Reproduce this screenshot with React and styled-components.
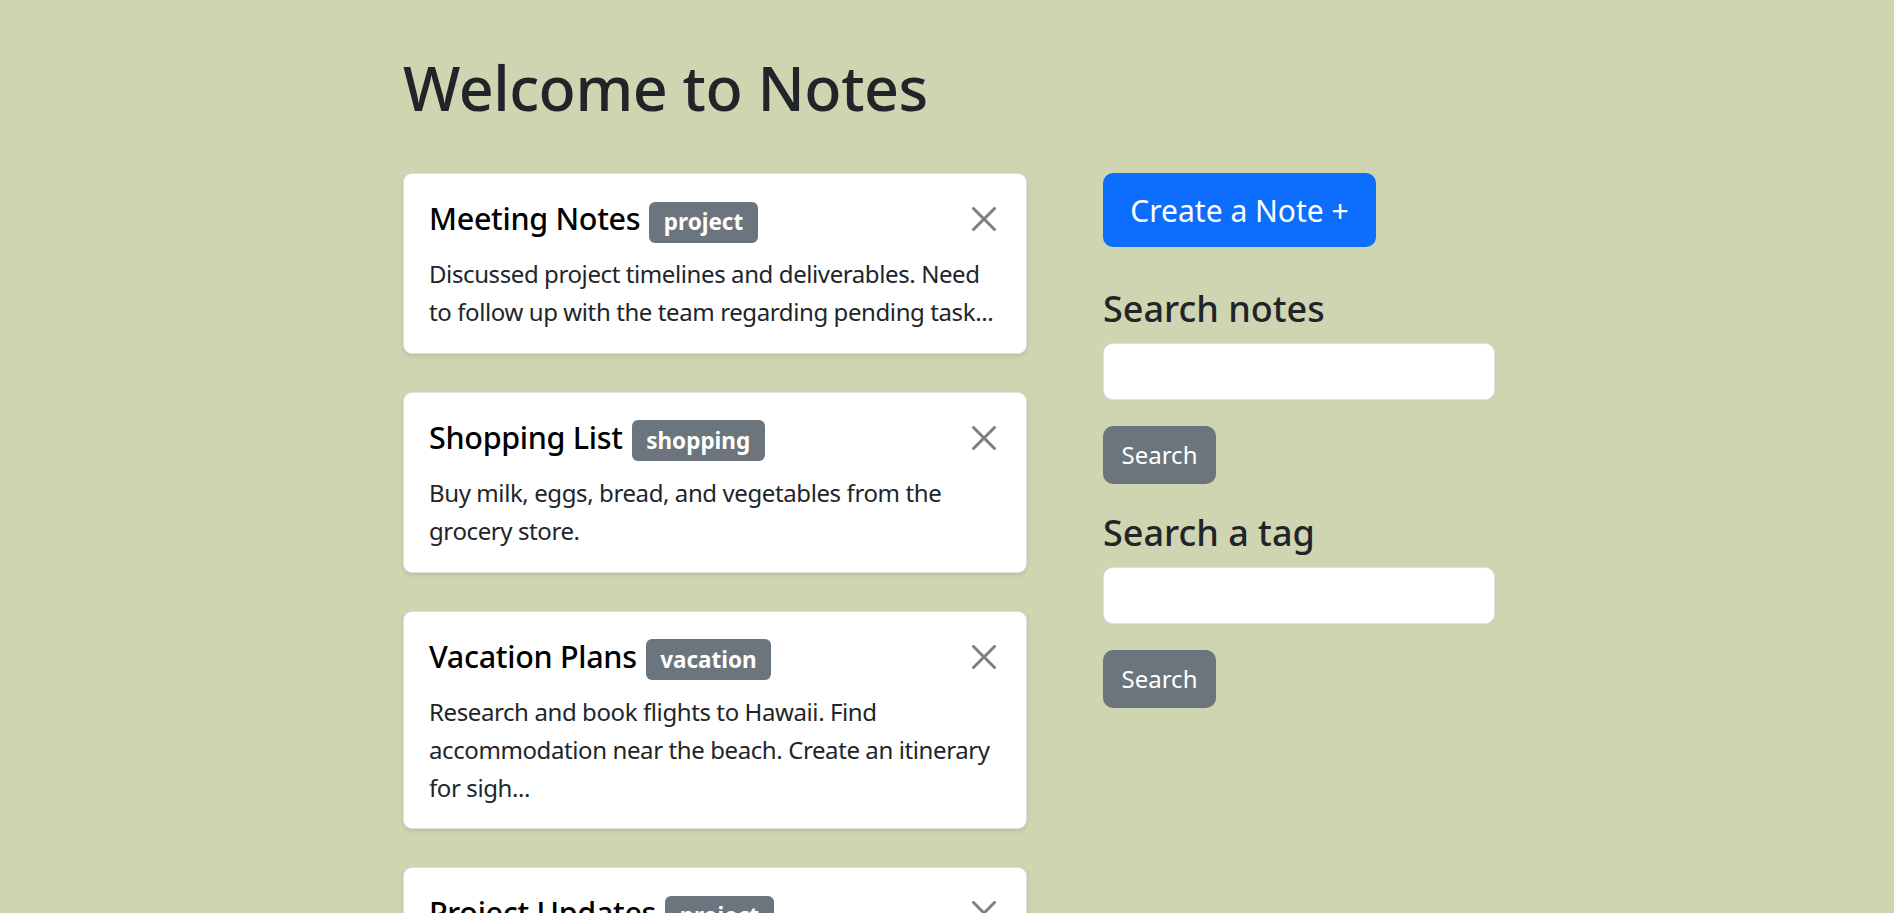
import React from "react";
import styled, { createGlobalStyle } from "styled-components";

const GlobalStyle = createGlobalStyle`
  html, body { margin: 0; padding: 0; }
  body {
    background: #cfd5b0;
    font-family: "Noto Sans", "Open Sans", sans-serif;
    color: #212529;
  }
  * { box-sizing: border-box; }
`;

const Page = styled.div`
  width: 1092px;
  margin-left: calc(50% - 544px);
  padding-top: 51px;
`;

const Title = styled.h1`
  margin: 0 0 49px;
  font-size: 61px;
  font-weight: 500;
  letter-spacing: -0.5px;
  line-height: 1.2;
  color: #212529;
`;

const Layout = styled.div`
  display: grid;
  grid-template-columns: 624px 392px;
  column-gap: 76px;
  align-items: start;
`;

const NoteList = styled.div`
  display: flex;
  flex-direction: column;
  gap: 38px;
`;

const Card = styled.div`
  background: #fff;
  border: 1px solid rgba(0, 0, 0, 0.12);
  border-radius: 9px;
  padding: 26px 25px 21.5px;
  box-shadow: 0 2px 4px rgba(0, 0, 0, 0.1);
`;

const CardHead = styled.div`
  display: flex;
  align-items: flex-start;
  margin-bottom: 12.8px;
`;

const CardTitle = styled.h5`
  margin: 0;
  font-size: 30.5px;
  font-weight: 500;
  letter-spacing: -0.3px;
  line-height: 1.2;
  color: #000;
`;

const Badge = styled.span`
  display: inline-block;
  margin-left: 9px;
  padding: 8.4px 14.5px;
  border-radius: 6px;
  background: #6c757d;
  color: #fff;
  font-size: 22.5px;
  font-weight: 700;
  letter-spacing: 0;
  line-height: 24px;
  vertical-align: baseline;
`;

const CloseButton = styled.button`
  margin: 7px 5px 0 auto;
  width: 24px;
  height: 24px;
  padding: 0;
  border: 0;
  background: transparent;
  display: flex;
  align-items: center;
  justify-content: center;
  flex-shrink: 0;
  cursor: pointer;
  opacity: 0.5;
`;

const CardText = styled.p`
  margin: 0;
  font-size: 24px;
  letter-spacing: -0.4px;
  line-height: 38px;
  color: #212529;
`;

const Sidebar = styled.div`
  display: flex;
  flex-direction: column;
  align-items: flex-start;
`;

const PrimaryButton = styled.button`
  height: 74px;
  width: 273px;
  border: 0;
  border-radius: 10px;
  background: #0d6efd;
  color: #fff;
  font-family: inherit;
  font-size: 30px;
  cursor: pointer;
`;

const SectionTitle = styled.h4`
  margin: ${(p) => (p.$first ? "40px" : "27px")} 0 12.5px;
  font-size: 36px;
  font-weight: 500;
  line-height: 1.2;
  color: #212529;
`;

const Input = styled.input`
  width: 100%;
  height: 57px;
  border: 1.5px solid #dee2e6;
  border-radius: 10px;
  background: #fff;
  padding: 0 19px;
  font-family: inherit;
  font-size: 24px;
  color: #212529;
`;

const SecondaryButton = styled.button`
  margin-top: 26px;
  height: 58px;
  width: 113px;
  border: 0;
  border-radius: 10px;
  background: #6c757d;
  color: #fff;
  font-family: inherit;
  font-size: 24px;
  cursor: pointer;
`;

const notes = [
  {
    title: "Meeting Notes",
    tag: "project",
    text: "Discussed project timelines and deliverables. Need to follow up with the team regarding pending task...",
  },
  {
    title: "Shopping List",
    tag: "shopping",
    text: "Buy milk, eggs, bread, and vegetables from the grocery store.",
  },
  {
    title: "Vacation Plans",
    tag: "vacation",
    text: "Research and book flights to Hawaii. Find accommodation near the beach. Create an itinerary for sigh...",
  },
  {
    title: "Project Updates",
    tag: "project",
    text: "Reviewed the latest milestones and updated the roadmap for the next quarter.",
  },
];

const CloseIcon = () => (
  <svg width="24" height="24" viewBox="0 0 16 16" aria-hidden="true">
    <path
      fill="#000"
      d="M.293.293a1 1 0 0 1 1.414 0L8 6.586 14.293.293a1 1 0 1 1 1.414 1.414L9.414 8l6.293 6.293a1 1 0 0 1-1.414 1.414L8 9.414l-6.293 6.293a1 1 0 0 1-1.414-1.414L6.586 8 .293 1.707a1 1 0 0 1 0-1.414z"
    />
  </svg>
);

export default function App() {
  return (
    <>
      <GlobalStyle />
      <Page>
        <Title>Welcome to Notes</Title>
        <Layout>
          <NoteList>
            {notes.map((n) => (
              <Card key={n.title}>
                <CardHead>
                  <CardTitle>
                    {n.title}
                    <Badge>{n.tag}</Badge>
                  </CardTitle>
                  <CloseButton aria-label="Close">
                    <CloseIcon />
                  </CloseButton>
                </CardHead>
                <CardText>{n.text}</CardText>
              </Card>
            ))}
          </NoteList>
          <Sidebar>
            <PrimaryButton>Create a Note +</PrimaryButton>
            <SectionTitle $first>Search notes</SectionTitle>
            <Input type="text" />
            <SecondaryButton>Search</SecondaryButton>
            <SectionTitle>Search a tag</SectionTitle>
            <Input type="text" />
            <SecondaryButton>Search</SecondaryButton>
          </Sidebar>
        </Layout>
      </Page>
    </>
  );
}
